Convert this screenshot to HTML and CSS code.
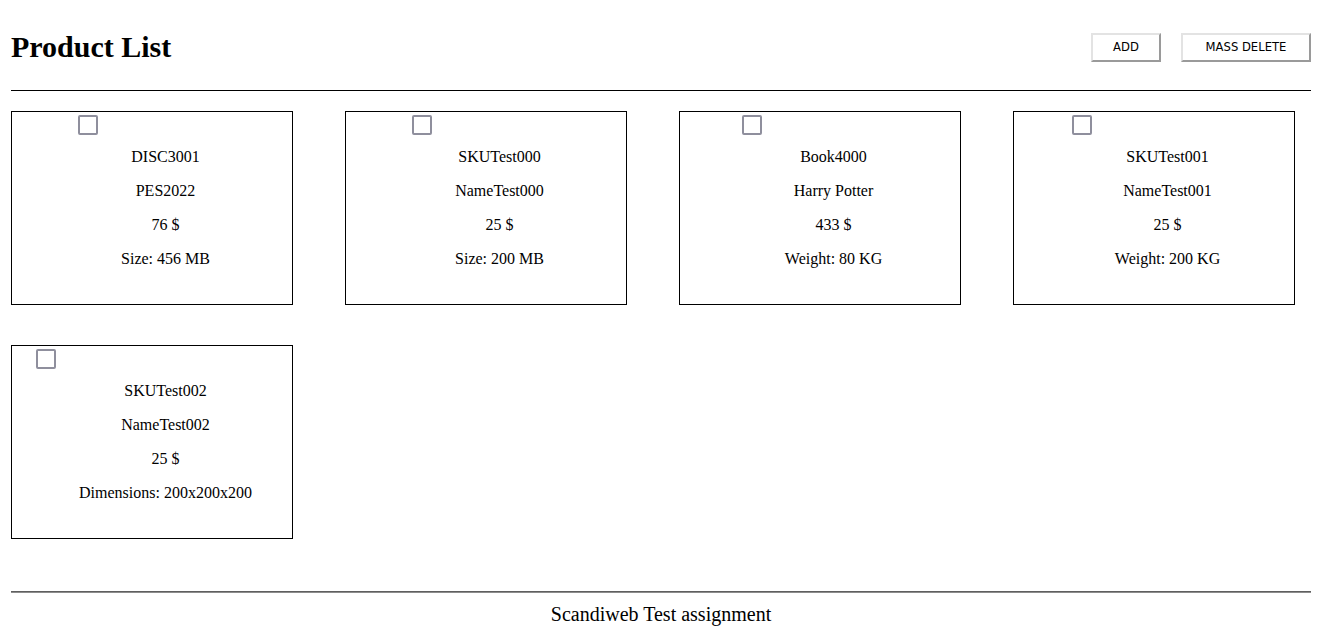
FILE: index.html
```html
<!DOCTYPE html>
<html lang="en">
<head>
<meta charset="utf-8">
<title>Product List</title>
<link rel="stylesheet" href="styles.css">
</head>
<body>
<div class="page">
  <header class="header">
    <h1 class="title">Product List</h1>
    <div class="actions">
      <button class="btn btn-add" type="button">ADD</button>
      <button class="btn btn-delete" type="button">MASS DELETE</button>
    </div>
  </header>
  <div class="rule"></div>
  <main class="grid">
    <div class="card">
      <span class="check"></span>
      <div class="info">
        <p>DISC3001</p>
        <p>PES2022</p>
        <p>76 $</p>
        <p>Size: 456 MB</p>
      </div>
    </div>
    <div class="card">
      <span class="check"></span>
      <div class="info">
        <p>SKUTest000</p>
        <p>NameTest000</p>
        <p>25 $</p>
        <p>Size: 200 MB</p>
      </div>
    </div>
    <div class="card">
      <span class="check"></span>
      <div class="info">
        <p>Book4000</p>
        <p>Harry Potter</p>
        <p>433 $</p>
        <p>Weight: 80 KG</p>
      </div>
    </div>
    <div class="card">
      <span class="check"></span>
      <div class="info">
        <p>SKUTest001</p>
        <p>NameTest001</p>
        <p>25 $</p>
        <p>Weight: 200 KG</p>
      </div>
    </div>
    <div class="card">
      <span class="check"></span>
      <div class="info">
        <p>SKUTest002</p>
        <p>NameTest002</p>
        <p>25 $</p>
        <p>Dimensions: 200x200x200</p>
      </div>
    </div>
  </main>
  <footer class="footer">
    <div class="footer-rule"></div>
    <p class="footer-text">Scandiweb Test assignment</p>
  </footer>
</div>
</body>
</html>
```
FILE: styles.css
```css
html, body {
  margin: 0;
  padding: 0;
  background: #fff;
}
body {
  font-family: "Liberation Serif", "Times New Roman", serif;
  color: #000;
}
.page {
  padding: 0 12px 0 11px;
}
.header {
  display: flex;
  justify-content: space-between;
  align-items: center;
  padding-top: 29px;
  height: 36px;
}
.title {
  margin: 0;
  font-size: 30px;
  font-weight: bold;
  line-height: 36px;
}
.actions {
  display: flex;
  gap: 20px;
}
.btn {
  height: 29px;
  background: #fff;
  border: 2px solid;
  border-color: #e3e3e3 #9a9a9a #9a9a9a #e3e3e3;
  font-family: "DejaVu Sans", Verdana, sans-serif;
  font-size: 11.6px;
  color: #000;
  padding: 0;
  margin: 0;
}
.btn-add { width: 70px; }
.btn-delete { width: 130px; }
.rule {
  margin-top: 25px;
  height: 1px;
  background: #000;
}
.grid {
  display: grid;
  grid-template-columns: repeat(4, 282px);
  column-gap: 52px;
  row-gap: 40px;
  margin-top: 20px;
}
.card {
  box-sizing: border-box;
  height: 194px;
  border: 1px solid #000;
  display: flex;
  justify-content: center;
  align-items: flex-start;
}
.check {
  box-sizing: border-box;
  width: 20px;
  height: 20px;
  margin: 3px 23px 0 4px;
  border: 2px solid #8f8f9d;
  border-radius: 2px;
  background: #fff;
  flex: none;
}
.info {
  margin-right: 20px;
  padding-top: 36px;
  text-align: center;
  font-size: 16px;
}
.info p {
  margin: 0 0 16px;
  line-height: 18px;
  white-space: nowrap;
}
.footer {
  margin-top: 52px;
}
.footer-rule {
  height: 1px;
  border-top: 1px solid #5f5f5f;
  background: #8c8c8c;
}
.footer-text {
  margin: 10px 0 0;
  text-align: center;
  font-size: 20px;
  line-height: 23px;
}
```
